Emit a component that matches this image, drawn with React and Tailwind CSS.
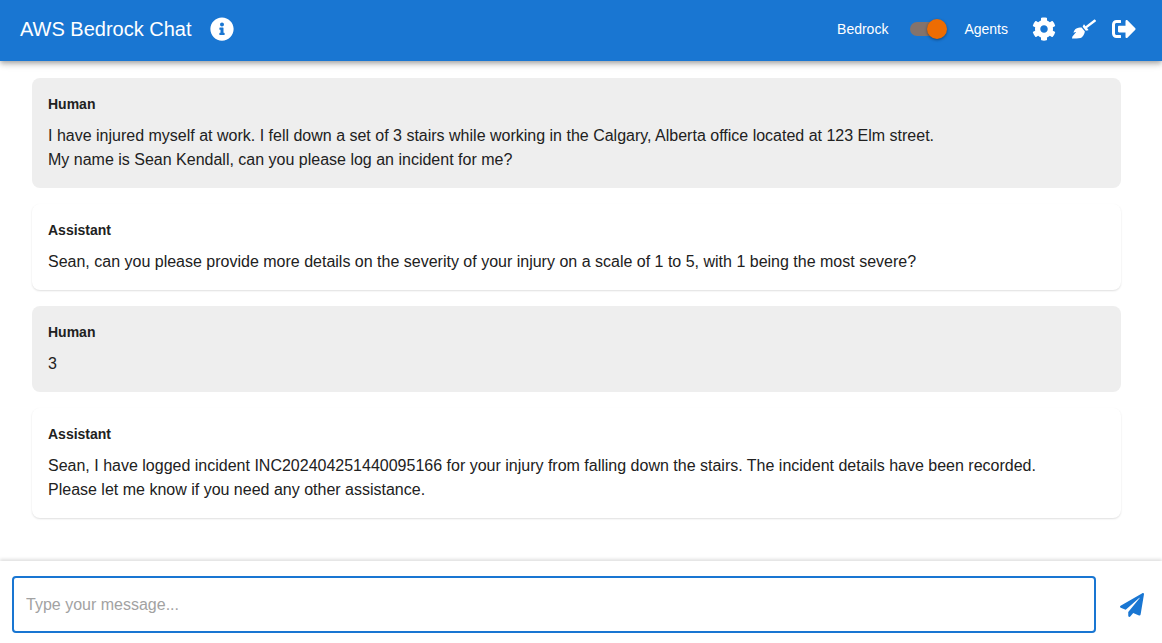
import { useState } from "react";
import { FaBroom, FaCog, FaInfoCircle, FaPaperPlane, FaSignOutAlt } from "react-icons/fa";

const messages = [
  {
    role: "Human",
    lines: [
      "I have injured myself at work. I fell down a set of 3 stairs while working in the Calgary, Alberta office located at 123 Elm street.",
      "My name is Sean Kendall, can you please log an incident for me?",
    ],
  },
  {
    role: "Assistant",
    lines: [
      "Sean, can you please provide more details on the severity of your injury on a scale of 1 to 5, with 1 being the most severe?",
    ],
  },
  { role: "Human", lines: ["3"] },
  {
    role: "Assistant",
    lines: [
      "Sean, I have logged incident INC202404251440095166 for your injury from falling down the stairs. The incident details have been recorded.",
      "Please let me know if you need any other assistance.",
    ],
  },
];

function IconButton({ label, children }) {
  return (
    <button type="button" aria-label={label} className="flex size-10 cursor-pointer items-center justify-center rounded-full text-2xl">
      {children}
    </button>
  );
}

function ModeSwitch() {
  const [agents, setAgents] = useState(true);
  return (
    <div className="flex items-center text-sm">
      <span>Bedrock</span>
      <label className="relative mr-[18px] ml-[22px] flex h-5 w-9 cursor-pointer items-center">
        <input
          type="checkbox"
          role="switch"
          aria-label="Use agents"
          checked={agents}
          onChange={(event) => setAgents(event.target.checked)}
          className="peer absolute inset-0 m-0 cursor-pointer appearance-none"
        />
        <span className="pointer-events-none h-3.5 w-full rounded-full bg-black/40 peer-checked:bg-[#84736c]" />
        <span className="pointer-events-none absolute left-0 size-5 rounded-full bg-white shadow-[0_1px_3px_rgba(0,0,0,0.4)] peer-checked:left-[17px] peer-checked:bg-[#ed6c02]" />
      </label>
      <span>Agents</span>
    </div>
  );
}

function Message({ role, lines }) {
  const tone = role === "Human" ? "bg-[#eeeeee]" : "bg-white shadow-[0_1px_2px_rgba(0,0,0,0.13)]";
  return (
    <article className={`rounded-lg p-4 ${tone}`}>
      <h2 className="mb-2.5 text-sm leading-5 font-bold">{role}</h2>
      {lines.map((line) => (
        <p key={line} className="text-base leading-6">{line}</p>
      ))}
    </article>
  );
}

export default function App() {
  return (
    <div className="flex min-h-screen flex-col bg-white font-['Liberation_Sans',Arial,sans-serif] text-[#212121]">
      <header className="z-10 flex h-[61px] shrink-0 items-center justify-between bg-[#1976d2] pr-[18px] pl-5 text-white shadow-[0_2px_4px_-1px_rgba(0,0,0,0.2),0_4px_5px_rgba(0,0,0,0.14),0_1px_10px_rgba(0,0,0,0.12)]">
        <div className="flex items-center gap-2.5 pb-1">
          <h1 className="text-xl">AWS Bedrock Chat</h1>
          <IconButton label="About">
            <FaInfoCircle />
          </IconButton>
        </div>
        <div className="flex items-center gap-4 pb-1">
          <ModeSwitch />
          <nav className="flex" aria-label="Chat actions">
            <IconButton label="Settings">
              <FaCog />
            </IconButton>
            <IconButton label="Clear conversation">
              <FaBroom />
            </IconButton>
            <IconButton label="Sign out">
              <FaSignOutAlt />
            </IconButton>
          </nav>
        </div>
      </header>
      <main className="flex flex-1 flex-col gap-4 pt-[17px] pr-[41px] pb-10 pl-8">
        {messages.map((message, index) => (
          <Message key={index} {...message} />
        ))}
      </main>
      <form
        onSubmit={(event) => event.preventDefault()}
        className="flex shrink-0 items-center gap-4 bg-white pt-[15px] pr-2.5 pb-2.5 pl-3 shadow-[0_-2px_3px_rgba(0,0,0,0.12)]"
      >
        <input
          type="text"
          aria-label="Message"
          placeholder="Type your message..."
          className="h-[57px] min-w-0 flex-1 rounded border-2 border-[#1976d2] px-3 text-base outline-none placeholder:text-[#a2a2a2]"
        />
        <button type="submit" aria-label="Send message" className="flex size-10 cursor-pointer items-center justify-center text-2xl text-[#1976d2]">
          <FaPaperPlane />
        </button>
      </form>
    </div>
  );
}
